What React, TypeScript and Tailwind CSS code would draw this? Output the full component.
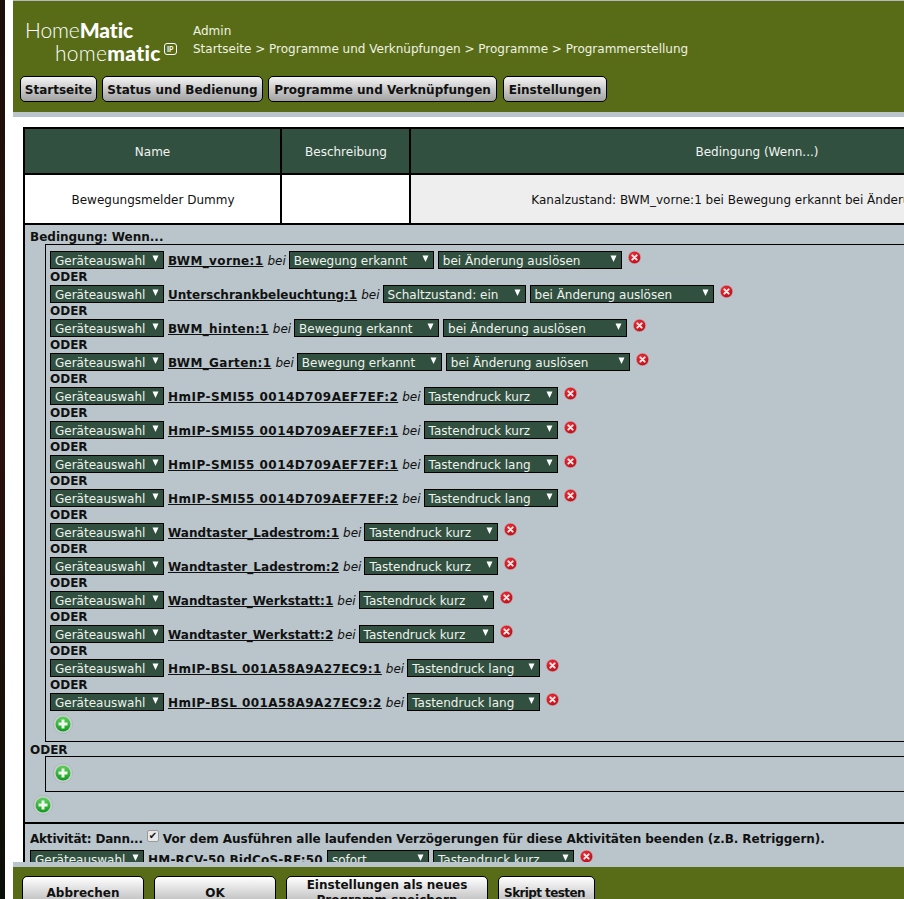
import type { ReactNode } from "react";

const panelFont = "font-['DejaVu_Sans',sans-serif]";

const bwm = "tracking-[0.36px]";
const hmip = "tracking-[0.46px]";
const bsl = "tracking-[0.42px]";
const plain = "tracking-normal";
const lade = "tracking-[0.05px]";

// a condition row: name, then the selects with their pixel widths
const rows: { name: string; spacing: string; selects: [string, string][] }[] = [
  { name: "BWM_vorne:1", spacing: bwm, selects: [["Bewegung erkannt", "w-[145px]"], ["bei Änderung auslösen", "w-[184px]"]] },
  { name: "Unterschrankbeleuchtung:1", spacing: plain, selects: [["Schaltzustand: ein", "w-[143px]"], ["bei Änderung auslösen", "w-[184px]"]] },
  { name: "BWM_hinten:1", spacing: bwm, selects: [["Bewegung erkannt", "w-[145px]"], ["bei Änderung auslösen", "w-[184px]"]] },
  { name: "BWM_Garten:1", spacing: bwm, selects: [["Bewegung erkannt", "w-[145px]"], ["bei Änderung auslösen", "w-[184px]"]] },
  { name: "HmIP-SMI55 0014D709AEF7EF:2", spacing: hmip, selects: [["Tastendruck kurz", "w-[134px]"]] },
  { name: "HmIP-SMI55 0014D709AEF7EF:1", spacing: hmip, selects: [["Tastendruck kurz", "w-[134px]"]] },
  { name: "HmIP-SMI55 0014D709AEF7EF:1", spacing: hmip, selects: [["Tastendruck lang", "w-[134px]"]] },
  { name: "HmIP-SMI55 0014D709AEF7EF:2", spacing: hmip, selects: [["Tastendruck lang", "w-[134px]"]] },
  { name: "Wandtaster_Ladestrom:1", spacing: lade, selects: [["Tastendruck kurz", "w-[134px]"]] },
  { name: "Wandtaster_Ladestrom:2", spacing: lade, selects: [["Tastendruck kurz", "w-[134px]"]] },
  { name: "Wandtaster_Werkstatt:1", spacing: plain, selects: [["Tastendruck kurz", "w-[135px]"]] },
  { name: "Wandtaster_Werkstatt:2", spacing: plain, selects: [["Tastendruck kurz", "w-[135px]"]] },
  { name: "HmIP-BSL 001A58A9A27EC9:1", spacing: bsl, selects: [["Tastendruck lang", "w-[133px]"]] },
  { name: "HmIP-BSL 001A58A9A27EC9:2", spacing: bsl, selects: [["Tastendruck lang", "w-[133px]"]] },
];

function Select({ label, className }: { label: string; className: string }) {
  return (
    <div className={`flex h-[18px] shrink-0 items-center justify-between border border-black bg-[#325040] pl-1 pr-1 text-[12px] font-normal tracking-normal leading-none text-[#eef3ee] ${className}`}>
      <span className="whitespace-nowrap pt-px">{label}</span>
      <svg width="7" height="7" viewBox="0 0 7 7" className="mb-[3px] shrink-0">
        <path d="M0.5 0.5h6L3.5 7z" fill="#ffffff" />
      </svg>
    </div>
  );
}

function DeleteIcon({ id }: { id: string }) {
  return (
    <svg width="13" height="13" viewBox="0 0 13 13" className="mb-[5px] ml-[6px] shrink-0">
      <defs>
        <radialGradient id={id} cx="0.4" cy="0.35" r="0.75">
          <stop offset="0" stopColor="#f2303a" />
          <stop offset="1" stopColor="#b00a14" />
        </radialGradient>
      </defs>
      <circle cx="6.5" cy="6.5" r="6.2" fill={`url(#${id})`} stroke="#cbb6b8" strokeWidth="0.6" />
      <path d="M4.3 4.3l4.4 4.4M8.7 4.3l-4.4 4.4" stroke="#f6eeee" strokeWidth="1.9" strokeLinecap="round" />
    </svg>
  );
}

function PlusIcon({ id, className }: { id: string; className: string }) {
  return (
    <svg width="20" height="20" viewBox="0 0 20 20" className={`block ${className}`}>
      <defs>
        <linearGradient id={id} x1="0" y1="0" x2="0" y2="1">
          <stop offset="0" stopColor="#5fd05f" />
          <stop offset="1" stopColor="#0f9a1c" />
        </linearGradient>
      </defs>
      <circle cx="10" cy="10" r="9.5" fill="#c9cfd1" stroke="#a5acaf" strokeWidth="0.6" />
      <circle cx="10" cy="10" r="7.5" fill={`url(#${id})`} />
      <path d="M10 5.5v9M5.5 10h9" stroke="#f2f7ee" strokeWidth="3" />
    </svg>
  );
}

function ConditionRow({ index, name, spacing, selects }: { index: number; name: string; spacing: string; selects: [string, string][] }) {
  return (
    <div className="flex h-[18px] items-center whitespace-nowrap">
      <Select label="Geräteauswahl" className="w-[114px]" />
      <span className={`ml-1 pt-px text-[12px] font-bold underline ${spacing}`}>{name}</span>
      <span className="ml-1 mr-[3px] pt-px text-[12px] italic">bei</span>
      <div className="flex gap-1">
        {selects.map(([label, width], i) => (
          <Select key={i} label={label} className={width} />
        ))}
      </div>
      <DeleteIcon id={`del-${index}`} />
    </div>
  );
}

function NavButton({ children, className }: { children: ReactNode; className: string }) {
  return (
    <div className={`flex h-[26px] items-center justify-center whitespace-nowrap rounded-[5px] border border-black bg-gradient-to-b from-[#f4f4f4] to-[#a2a2a2] pt-px text-[12px] font-bold text-[#111] ${className}`}>
      {children}
    </div>
  );
}

function FooterButton({ children, className }: { children: ReactNode; className: string }) {
  return (
    <div className={`flex h-[33px] shrink-0 items-center justify-center rounded-[5px] border border-black bg-gradient-to-b from-[#ffffff] to-[#b0b0b0] text-center text-[12px] leading-[15px] font-bold text-[#111] ${className}`}>
      {children}
    </div>
  );
}

export default function App() {
  return (
    <div className={`flex h-[899px] w-[904px] overflow-hidden bg-white ${panelFont} text-[#111]`}>
      <div className="w-[5px] shrink-0 bg-gradient-to-b from-[#1c0f08] via-[#2a100a] to-[#0a0f08]" />
      <div className="flex min-w-0 flex-1 flex-col pl-2">
        <div className="h-px shrink-0 bg-[#b9b9b9]" />
        <div className="shrink-0 bg-[#586c18] pl-[7px] text-[12px] text-[#f0f2e0]">
          <div className="flex h-[75px] pt-3">
            <div className="relative w-[173px] font-['Lato',sans-serif] leading-none text-white">
              <div className="absolute top-[6px] left-[5px] text-[21px] font-light tracking-[-0.1px]">
                Home<span className="font-black">Matic</span>
              </div>
              <div className="absolute top-[29px] left-[35px] flex text-[21px] font-light tracking-[0.3px]">
                home<span className="font-black">matic</span>
                <span className="mt-[1px] ml-[3px] flex h-[12px] w-[13px] items-center justify-center rounded-[3px] border border-white text-[7px] font-bold tracking-normal">IP</span>
              </div>
            </div>
            <div className="leading-[18px]">
              <div className="mt-[9px]">Admin</div>
              <div className="whitespace-nowrap">Startseite &gt; Programme und Verknüpfungen &gt; Programme &gt; Programmerstellung</div>
            </div>
          </div>
          <div className="flex h-[36px] gap-[5px]">
            <NavButton className="w-[77px]">Startseite</NavButton>
            <NavButton className="w-[161px]">Status und Bedienung</NavButton>
            <NavButton className="w-[229px]">Programme und Verknüpfungen</NavButton>
            <NavButton className="ml-px w-[104px]">Einstellungen</NavButton>
          </div>
        </div>
        <div className="h-[5px] shrink-0 bg-[#b9c5cb]" />

        <div className="min-h-0 flex-1 overflow-hidden pt-[10px] pl-[10px]">
          <div className="w-[1200px] text-[12px]">
            <div className="grid grid-cols-[255px_127px_692px] gap-[2px] border-2 border-black bg-black text-center">
              <div className="flex h-[44px] items-center justify-center bg-[#325040] pt-px text-[#f0f4f0]">Name</div>
              <div className="flex h-[44px] items-center justify-center bg-[#325040] pt-px pl-px text-[#f0f4f0]">Beschreibung</div>
              <div className="flex h-[44px] items-center justify-center bg-[#325040] pt-px text-[#f0f4f0]">Bedingung (Wenn...)</div>
              <div className="flex h-[48px] items-center justify-center bg-white pt-px pl-px">Bewegungsmelder Dummy</div>
              <div className="h-[48px] bg-white" />
              <div className="flex h-[48px] items-center justify-center whitespace-nowrap bg-[#eeeeee] pt-px">
                Kanalzustand: BWM_vorne:1 bei Bewegung erkannt bei Änderung auslösen
              </div>
            </div>

            <div className="border-l-2 border-black bg-[#b9c5cb]">
              <div className="pl-[5px] pt-[6px] text-[12px] leading-[13px] font-bold">Bedingung: Wenn...</div>
              <div className="ml-[20px] border border-black pt-[6px] pl-1 pb-[7px]">
                {rows.map((row, i) => (
                  <div key={i}>
                    {i > 0 && <div className="h-4 text-[12px] leading-[16px] font-bold">ODER</div>}
                    <ConditionRow index={i} name={row.name} spacing={row.spacing} selects={row.selects} />
                  </div>
                ))}
                <PlusIcon id="plus-a" className="mt-[3px] ml-[3px]" />
              </div>
              <div className="h-[14px] pl-[5px] text-[12px] leading-[16px] font-bold">ODER</div>
              <div className="ml-[20px] h-[36px] border border-black pt-[6px] pl-[7px]">
                <PlusIcon id="plus-b" className="" />
              </div>
              <div className="h-[30px] pt-[3px] pl-2">
                <PlusIcon id="plus-c" className="" />
              </div>
            </div>

            <div className="border-t-2 border-l-2 border-black bg-[#b9c5cb] pl-[5px] text-[12px]">
              <div className="flex h-[26px] items-end whitespace-nowrap pb-[3px] font-bold leading-[16px]">
                <span className="tracking-[-0.2px]">Aktivität: Dann...</span>
                <span className="mx-[4px] mb-[5px] flex h-[12px] w-[12px] items-center justify-center rounded-[2px] border border-[#999] bg-[#e8e8e8] text-[10px] leading-none">✔</span>
                <span className="tracking-[-0.05px]">Vor dem Ausführen alle laufenden Verzögerungen für diese Aktivitäten beenden (z.B. Retriggern).</span>
              </div>
              <div className="flex h-[18px] items-center whitespace-nowrap">
                <Select label="Geräteauswahl" className="w-[114px]" />
                <span className="ml-1 pt-px font-bold tracking-[0.22px]">HM-RCV-50 BidCoS-RF:50</span>
                <Select label="sofort" className="ml-1 w-[102px]" />
                <Select label="Tastendruck kurz" className="ml-1 w-[141px]" />
                <DeleteIcon id="del-action" />
              </div>
            </div>
          </div>
        </div>

        <div className="h-[5px] shrink-0 bg-[#b9c5cb]" />
        <div className="flex h-[32px] shrink-0 gap-[10px] overflow-hidden bg-[#586c18] pt-[9px] pl-[9px]">
          <FooterButton className="w-[122px] pt-px">Abbrechen</FooterButton>
          <FooterButton className="w-[122px] pt-px">OK</FooterButton>
          <FooterButton className="w-[202px]">Einstellungen als neues<br />Programm speichern</FooterButton>
          <FooterButton className="w-[97px] pt-px pr-1 tracking-[-0.6px]">Skript testen</FooterButton>
        </div>
      </div>
    </div>
  );
}
